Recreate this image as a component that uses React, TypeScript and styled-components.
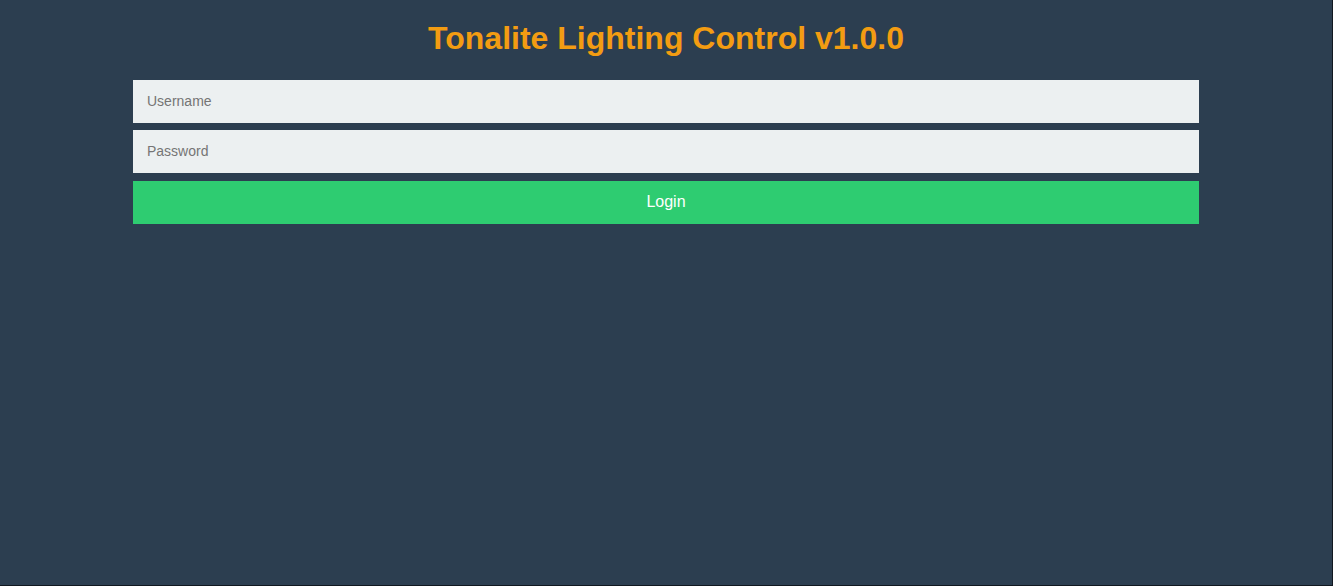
import styled, { createGlobalStyle } from "styled-components"

const GlobalStyle = createGlobalStyle`
    html, body {
        margin: 0;
        padding: 0;
        background-color: #2c3e50;
        font-family: "Liberation Sans", Arial, sans-serif;
    }
    * {
        box-sizing: border-box;
    }
`

const Page = styled.div`
    height: 100vh;
    width: 100vw;
    border-right: 1px solid #111820;
    border-bottom: 1px solid #111820;
    padding-top: 20px;
    display: flex;
    flex-direction: column;
    align-items: center;
`

const Title = styled.h1`
    margin: 0 0 23px 0;
    color: #f39c12;
    font-size: 32px;
    font-weight: bold;
    line-height: 37px;
    text-align: center;
`

const Form = styled.form`
    width: 1066px;
    display: flex;
    flex-direction: column;
`

const Field = styled.input<{ $gap: number }>`
    height: 43px;
    width: 100%;
    border: none;
    outline: none;
    margin-bottom: ${(p) => p.$gap}px;
    padding: 0 14px 2px 14px;
    background-color: #ecf0f1;
    color: #333;
    font-family: "Liberation Sans", Arial, sans-serif;
    font-size: 14px;
    &::placeholder {
        color: #757575;
    }
`

const LoginButton = styled.button`
    height: 43px;
    width: 100%;
    border: none;
    padding: 0 0 2px 0;
    background-color: #2ecc71;
    color: #fff;
    font-family: "Liberation Sans", Arial, sans-serif;
    font-size: 16px;
    cursor: pointer;
`

export default function App() {
    return (
        <>
            <GlobalStyle />
            <Page>
                <Title>Tonalite Lighting Control v1.0.0</Title>
                <Form onSubmit={(e) => e.preventDefault()}>
                    <Field $gap={7} type="text" placeholder="Username" />
                    <Field $gap={8} type="password" placeholder="Password" />
                    <LoginButton type="submit">Login</LoginButton>
                </Form>
            </Page>
        </>
    )
}
